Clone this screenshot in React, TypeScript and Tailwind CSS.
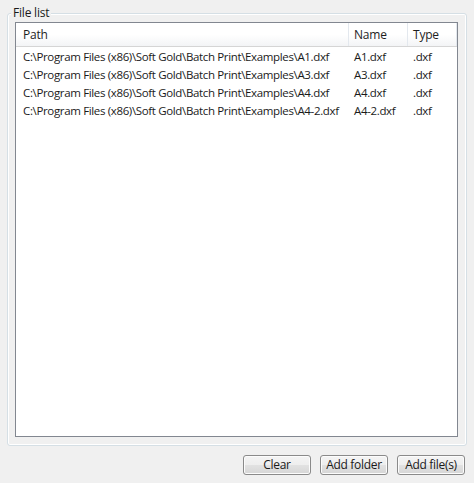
import React from "react";

const rows = [
  { path: "C:\\Program Files (x86)\\Soft Gold\\Batch Print\\Examples\\A1.dxf", name: "A1.dxf", type: ".dxf" },
  { path: "C:\\Program Files (x86)\\Soft Gold\\Batch Print\\Examples\\A3.dxf", name: "A3.dxf", type: ".dxf" },
  { path: "C:\\Program Files (x86)\\Soft Gold\\Batch Print\\Examples\\A4.dxf", name: "A4.dxf", type: ".dxf" },
  { path: "C:\\Program Files (x86)\\Soft Gold\\Batch Print\\Examples\\A4-2.dxf", name: "A4-2.dxf", type: ".dxf" },
];

function Btn({ label }: { label: string }) {
  return (
    <button className="w-[68px] h-[20px] rounded-[3px] border border-[#8a8a8a] bg-[linear-gradient(#f4f4f4_0%,#eeeeee_50%,#e2e2e2_50%,#d6d6d6_100%)] shadow-[inset_0_0_0_1px_#fcfcfc] text-[12px] tracking-[-0.3px] leading-none text-[#1a1a1a] flex items-center justify-center">
      {label}
    </button>
  );
}

export default function App() {
  return (
    <div className="w-[474px] h-[483px] bg-[#f0f0f0] flex flex-col px-[7px] pt-[13px] pb-[8px] font-['Open_Sans',sans-serif] text-[11.5px] tracking-[-0.35px] text-[#1a1a1a]">
      <div className="relative flex-1 flex flex-col border border-[#d5dfe5] rounded-[3px] shadow-[inset_0_0_0_1px_#ffffff] pl-[7px] pr-[8px] pt-[8px] pb-[8px]">
        <span className="absolute left-[3px] top-[-9px] px-[2px] bg-[#f0f0f0] leading-[16px] text-[12px] tracking-[-0.2px]">File list</span>
        <div className="flex-1 flex flex-col border border-[#828790] bg-white">
          <div className="flex h-[24px] border-b border-[#d5d5d5] bg-[linear-gradient(#ffffff_0%,#ffffff_50%,#f3f4f6_100%)] text-[#1e1e1e] text-[12px] tracking-[-0.2px]">
            <div className="w-[333px] pl-[7px] flex items-center border-r border-[#e3e8ee]">Path</div>
            <div className="w-[59px] pl-[5px] flex items-center border-r border-[#e3e8ee]">Name</div>
            <div className="w-[49px] pl-[5px] flex items-center border-r border-[#e3e8ee]">Type</div>
          </div>
          <div className="pt-[1px]">
            {rows.map((r) => (
              <div key={r.path} className="flex h-[18px] items-center">
                <div className="w-[333px] pl-[7px] whitespace-nowrap">{r.path}</div>
                <div className="w-[59px] pl-[5px] whitespace-nowrap">{r.name}</div>
                <div className="w-[49px] pl-[5px] whitespace-nowrap">{r.type}</div>
              </div>
            ))}
          </div>
        </div>
      </div>
      <div className="flex justify-end gap-[9px] mt-[9px] pr-[2px]">
        <Btn label="Clear" />
        <Btn label="Add folder" />
        <Btn label="Add file(s)" />
      </div>
    </div>
  );
}
